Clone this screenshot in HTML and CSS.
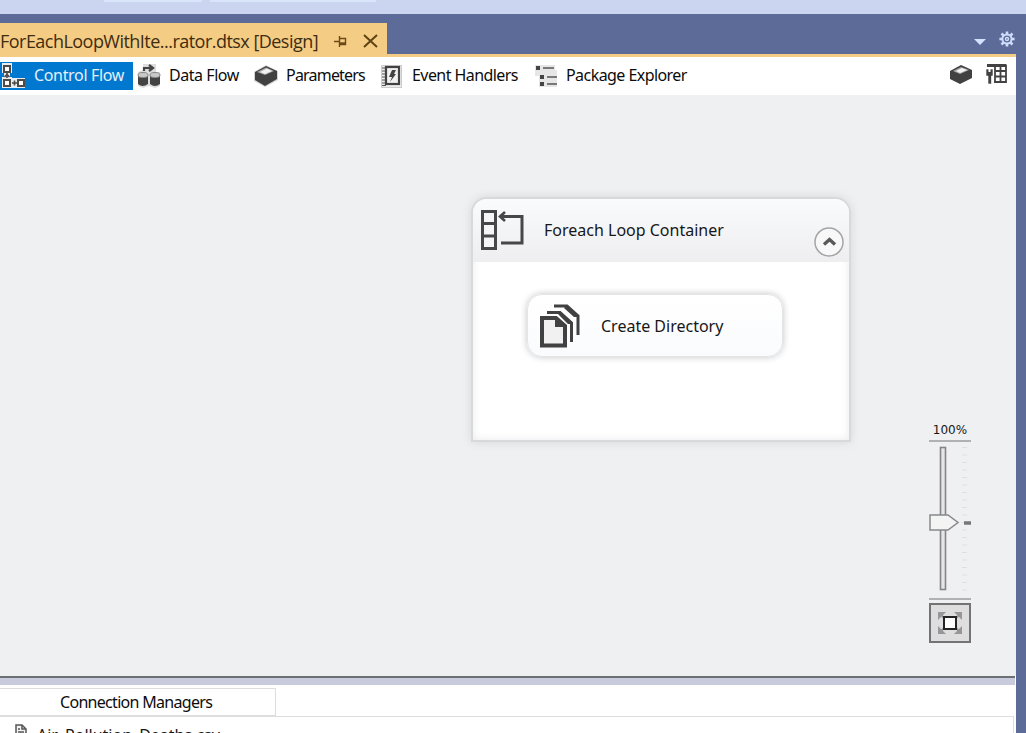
FILE: index.html
```html
<!DOCTYPE html>
<html lang="en">
<head>
<meta charset="utf-8">
<title>ForEachLoopWithIterator.dtsx [Design]</title>
<link rel="stylesheet" href="styles.css">
</head>
<body>
<div class="window">
  <div class="menu-strip"><i class="strip-one"></i><i class="strip-two"></i></div>
  <header class="document-bar">
    <div class="document-tab">
      <span class="document-title">ForEachLoopWithIte...rator.dtsx [Design]</span>
      <svg class="pin" width="14" height="12" viewBox="0 0 14 12" fill="none" stroke="#6b4a18"><path d="M0 6.5H5M5.5 1V12M6 3.5H11.5V9.5H6" stroke-width="1.4"/><path d="M6 8.5H12" stroke-width="2.4"/></svg>
      <svg class="close" width="15" height="14" viewBox="0 0 15 14" fill="none" stroke="#5e4315" stroke-width="2"><path d="M1 1L14 13M14 1L1 13"/></svg>
    </div>
    <div class="document-actions">
      <svg width="12" height="6" viewBox="0 0 12 6"><path d="M0 0H12L6 6Z" fill="#d5e2ff"/></svg>
      <svg class="gear" width="16" height="16" viewBox="-8 -8 16 16" fill="none" stroke="#cfdcfb"><circle r="4.6" stroke-width="2"/><circle r="1.5" stroke-width="1.4"/><path d="M0-5V-7.6M0 5V7.6M-5 0H-7.6M5 0H7.6M-3.6-3.6L-5.5-5.5M3.6-3.6L5.5-5.5M-3.6 3.6L-5.5 5.5M3.6 3.6L5.5 5.5" stroke-width="2.6"/></svg>
    </div>
  </header>
  <main class="designer">
    <nav class="views">
      <div class="view view-control">
        <svg width="26" height="26" viewBox="0 0 26 26"><path d="M2 0H12V10H10V14H12V15H25V25H2V14H4V10H2Z" fill="#e6edf3"/><g fill="#fff" stroke="#514943" stroke-width="2"><rect x="4" y="3" width="6" height="6"/><rect x="4" y="17" width="6" height="6"/><rect x="18" y="17" width="6" height="6"/></g><path d="M7 10V15M4.500 14L7 11.500L9.500 14M12 20H17M14.500 17.500V22.500" fill="none" stroke="#514943" stroke-width="1.600"/></svg>
        <span>Control Flow</span>
      </div>
      <div class="view view-data">
        <svg width="24" height="26" viewBox="0 0 24 26"><path d="M6 1H19V9H23V23L18 25 12 23 6 25 1 23V9L6 7Z" fill="#ddd"/><path d="M7 8V5H16M12 2L16 5 12 8" fill="none" stroke="#444" stroke-width="2.200"/><path d="M1 13V21Q5.500 25 11 21V13ZM13 13V21Q18 25 23 21V13Z" fill="#444"/><g fill="#c9c9c9" stroke="#888"><ellipse cx="6" cy="12" rx="5" ry="2.500"/><ellipse cx="18" cy="12" rx="5" ry="2.500"/></g></svg>
        <span>Data Flow</span>
      </div>
      <div class="view view-params">
        <svg width="24" height="22" viewBox="0 0 24 22"><path d="M0 7L12 0 24 6V15L11 22 0 16Z" fill="#d4d4d4"/><path d="M1 7L12 1 23 6V14L11 21 1 15Z" fill="#414141"/><path d="M3 7L12 2.500 20 6 11 10Z" fill="#aaa"/><path d="M6 7L13 3.500 18 6 11 9Z" fill="#f3f3f3"/></svg>
        <span>Parameters</span>
      </div>
      <div class="view view-events">
        <svg width="22" height="23" viewBox="0 0 22 23"><rect x=".5" y=".5" width="20" height="22" fill="#eee" stroke="#ccc"/><path d="M1 3H5M1 6H5M1 9H5M1 12H5M1 15H5M1 18H5M1 20.500H5" stroke="#555"/><rect x="5" y="2" width="13" height="17" fill="#f1f1f1" stroke="#424242" stroke-width="2.200"/><path d="M11 5H15L13 9H15L9 17 11 12H8Z" fill="#424242"/></svg>
        <span>Event Handlers</span>
      </div>
      <div class="view view-explorer">
        <svg width="23" height="23" viewBox="0 0 23 23"><path d="M0 0H20V5H22V22H4V11H0Z" fill="#e6e6e6"/><g fill="#444"><rect x="1" y="1" width="4" height="4"/><rect x="5" y="10" width="4" height="4"/><rect x="5" y="17" width="4" height="4"/></g><path d="M8 3H19M12 12H22M12 19H22" stroke="#555" stroke-width="1.600"/></svg>
        <span>Package Explorer</span>
      </div>
      <div class="view-tools">
        <svg width="22" height="19" viewBox="0 0 22 19"><path d="M0 6L11 0 22 5V13L10 19 0 14Z" fill="#414141"/><path d="M3 6L11 2 19 5 10 9Z" fill="#a9a9a9"/><path d="M6 6L12 3 17 5 10 8Z" fill="#f3f3f3"/></svg>
        <svg width="21" height="21" viewBox="0 0 21 21"><path d="M1 1.500H20V18H8M9 7H20M9 12.500H20M9 2V18M14.500 2V18" fill="none" stroke="#424242" stroke-width="1.800"/><path d="M1 1.500H20" stroke="#424242" stroke-width="3"/><path d="M0 5H7V12H5.500V20H2V12H0Z" fill="#424242" stroke="#fff" stroke-width=".6"/><path d="M3.500 4V8" stroke="#fff" stroke-width="2"/></svg>
      </div>
    </nav>
    <section class="canvas">
      <article class="loop-node">
        <header class="loop-header">
          <svg class="loop-icon" width="44" height="42" viewBox="0 0 44 42" fill="none" stroke="#474747"><g fill="#f5f5f7" stroke-width="3"><rect x="2.500" y="2.500" width="13" height="37"/><path d="M2 14.500H16M2 27H16"/></g><path d="M20 7.500H42V34H21" stroke-width="3"/><path d="M25 3L20 7.500 25 12" stroke-width="2.600"/></svg>
          <span class="loop-title">Foreach Loop Container</span>
          <svg class="collapse" width="30" height="30" viewBox="0 0 30 30"><circle cx="15" cy="15" r="14" fill="#f8f8f9" stroke="#a5a5a7" stroke-width="1.500"/><path d="M10 17.500L15.500 12.500 21 17.500" fill="none" stroke="#595959" stroke-width="3.300"/></svg>
        </header>
        <div class="task-node">
          <svg class="task-icon" width="40" height="44" viewBox="0 0 40 44" fill="none" stroke="#414141"><path d="M2 14H16L25 22V41.500H2Z" fill="#f1f1f1" stroke-width="4"/><path d="M15 12L27 23H15Z" fill="#414141" stroke="none"/><path d="M7 8.500H20L31.500 19V38M14 2H27L38 12V31" stroke-width="3"/><path d="M19 8L32 20H28L18 10ZM26 2L38 13H34L24 4Z" fill="#414141" stroke="none"/></svg>
          <span>Create Directory</span>
        </div>
      </article>
      <aside class="zoom-control">
        <div class="zoom-label">100%</div>
        <svg width="42" height="160" viewBox="0 0 42 160"><path d="M0 1H42M0 159H42" stroke="#9c9c9e" stroke-width="1.500"/><rect x="11.500" y="7.500" width="5" height="142" fill="#e6e6e8" stroke="#858587" stroke-width="1.600"/><path d="M35.500 7V151" stroke="#dedfe2" stroke-width="5" stroke-dasharray="1 6.500"/><path d="M1 75H19L29 82.500 19 90H1Z" fill="#f4f4f5" stroke="#88888a" stroke-width="1.500"/><path d="M35 83H42" stroke="#77777a" stroke-width="3.500"/></svg>
        <button class="fit-button" aria-label="Fit to window"><svg width="24" height="22" viewBox="0 0 24 22"><path d="M0 0H8L0 8ZM16 0H24V8ZM0 14L8 22H0ZM24 14V22H16Z" fill="#979799"/><path d="M2 2L7 7M22 2L17 7M2 20L7 15M22 20L17 15" stroke="#979799" stroke-width="2"/><rect x="6" y="5" width="12" height="12" fill="#fff" stroke="#242424" stroke-width="2"/></svg></button>
      </aside>
    </section>
    <div class="splitter"></div>
    <section class="connections">
      <h2 class="connections-tab"><span>Connection Managers</span></h2>
      <div class="connections-list">
        <svg width="12" height="16" viewBox="0 0 12 16" fill="#f3f3f3" stroke="#555" stroke-width="1.500"><path d="M1 1H7L11 5V15H1Z"/><path d="M7 1V5H11M3 5H5M3 8H9M3 11H9" fill="none"/></svg>
        <span>Air_Pollution_Deaths.csv</span>
      </div>
    </section>
  </main>
</div>
</body>
</html>
```
FILE: styles.css
```css
* { box-sizing: border-box; }
body { margin: 0; font-family: "Noto Sans", sans-serif; font-size: 16px; color: #171717; }
svg { display: block; flex: none; }
span { white-space: nowrap; }
.window { width: 1026px; height: 733px; overflow: hidden; background: #5d6b99; }
.menu-strip { height: 14px; background: #ccd5f0; display: flex; gap: 8px; padding-left: 104px; }
.menu-strip i { height: 2px; background: #d8e5fb; }
.strip-one { width: 98px; }
.strip-two { width: 166px; }
.document-bar { height: 40px; display: flex; justify-content: space-between; align-items: flex-end; }
.document-tab { width: 387px; height: 31px; background: #f4cc84; display: flex; align-items: center; padding-top: 4px; }
.document-title { width: 334px; font-size: 18px; color: #3f2d10; font-family: "Open Sans", sans-serif; letter-spacing: -.53px; }
.close { margin-left: 15px; }
.document-actions { display: flex; align-items: center; gap: 13px; padding: 0 11px 7px 0; }
.document-actions svg:first-child { margin-top: 5px; }
.designer { width: 1016px; height: 679px; background: #fff; border-top: 3px solid #f4cc84; }
.views { display: flex; height: 38px; padding-top: 5px; color: #0c0c0c; }
.view { height: 28px; display: flex; align-items: center; }
.view span { padding-bottom: 2px; }
.view-control { width: 133px; background: #0078cf; color: #e3f0fa; gap: 8px; letter-spacing: -.34px; }
.view-data { width: 117px; padding-left: 4px; gap: 8px; letter-spacing: -.45px; }
.view-params { width: 131px; padding-left: 4px; gap: 8px; letter-spacing: -.8px; }
.view-events { width: 154px; gap: 9px; letter-spacing: -.57px; }
.view-explorer { width: 170px; gap: 8px; letter-spacing: -.56px; }
.view-tools { display: flex; align-items: center; height: 24px; gap: 14px; margin-left: auto; padding-right: 9px; }
.canvas { height: 581px; background: #eff0f2; position: relative; }
.loop-node { position: absolute; left: 471px; top: 102px; width: 380px; height: 245px; border: 2px solid #d8d9db; border-radius: 16px 16px 0 0; background: #fff; box-shadow: 0 0 10px #d5d6d8, inset 0 0 9px #e9eaed; }
.loop-header { height: 63px; border-radius: 14px 14px 0 0; background: linear-gradient(#fafbfd, #eeeef0); display: flex; align-items: center; padding: 0 5px 0 7px; }
.loop-icon { margin-bottom: 2px; }
.loop-title { margin: 0 0 2px 20px; }
.collapse { margin: 23px 0 0 auto; }
.task-node { width: 256px; height: 63px; margin: 32px 0 0 54px; border: 1px solid #e4e5e7; border-radius: 15px; background: linear-gradient(#fff, #fafbfd); box-shadow: 0 0 7px #c4c4c5; display: flex; align-items: center; padding-left: 12px; gap: 21px; }
.zoom-control { position: absolute; left: 929px; top: 325px; width: 42px; }
.zoom-label { height: 20px; line-height: 20px; text-align: center; font-size: 12px; font-family: "DejaVu Sans", sans-serif; }
.fit-button { width: 42px; height: 40px; margin-top: 3px; padding: 0; border: 2px solid #737375; background: #dededf; display: flex; align-items: center; justify-content: center; }
.splitter { height: 9px; background: #c8cbdc; border-top: 2px solid #6c6f73; width: 1015px; }
.connections { padding-top: 3px; }
.connections-tab { margin: 0; width: 276px; height: 28px; border: 1px solid #ddd; border-left: 0; font-size: 16px; font-weight: 400; line-height: 27px; padding-left: 60px; letter-spacing: -.7px; color: #0c0c0c; }
.connections-list { width: 1014px; height: 30px; border: solid #ddd; border-width: 1px 1px 0 0; display: flex; padding: 7px 0 0 15px; gap: 10px; }
.connections-list span { line-height: 22px; }
```
